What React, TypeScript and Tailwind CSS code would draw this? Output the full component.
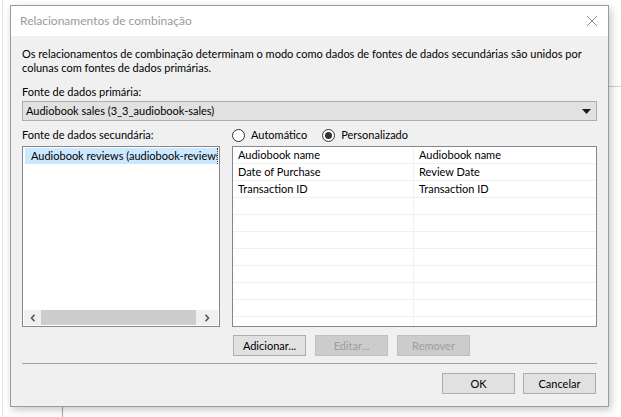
import React from "react";

const rows = [
  ["Audiobook name", "Audiobook name"],
  ["Date of Purchase", "Review Date"],
  ["Transaction ID", "Transaction ID"],
  ["", ""],
  ["", ""],
  ["", ""],
  ["", ""],
  ["", ""],
  ["", ""],
  ["", ""],
  ["", ""],
];

function Radio({ checked, label }: { checked?: boolean; label: string }) {
  return (
    <div className="flex items-center">
      <div className="w-[13px] h-[13px] rounded-full border border-[#333] bg-white flex items-center justify-center">
        {checked && <div className="w-[7px] h-[7px] rounded-full bg-[#333]" />}
      </div>
      <span className="ml-[6px]">{label}</span>
    </div>
  );
}

function Btn({ label, disabled }: { label: string; disabled?: boolean }) {
  return (
    <div
      className={
        disabled
          ? "w-[73px] h-[21px] border border-[#bfbfbf] bg-[#cccccc] text-[#9d9d9d] flex items-center justify-center"
          : "w-[73px] h-[21px] border border-[#adadad] bg-[#e1e1e1] text-black flex items-center justify-center"
      }
    >
      {label}
    </div>
  );
}

export default function App() {
  return (
    <div
      className="relative w-[621px] h-[417px] bg-white overflow-hidden text-[11px] leading-[14px] text-black"
      style={{ fontFamily: 'Lato, "Liberation Sans", Arial, sans-serif' }}
    >
      {/* background page lines */}
      <div className="absolute left-[2px] top-0 w-px h-[417px] bg-[#e3e3e3]" />
      <div className="absolute left-[62px] top-[406px] w-px h-[11px] bg-[#a8a8a8]" />
      <div className="absolute left-[609px] top-[86px] w-[12px] h-px bg-[#d0d0d0]" />

      {/* dialog window */}
      <div className="absolute left-[10px] top-[5px] w-[599px] h-[402px] border border-[#9b9b9b] bg-[#f0f0f0] shadow-[2px_3px_8px_rgba(0,0,0,0.22)] flex flex-col">
        <div className="h-[30px] bg-white flex items-center justify-between pl-[9px] pr-[9px]">
          <span className="text-[12px] text-[#9a9a9a]">Relacionamentos de combinação</span>
          <svg width="12" height="12" viewBox="0 0 12 12" className="mr-[1px]">
            <path d="M1 1 L11 11 M11 1 L1 11" stroke="#8a8a8a" strokeWidth="1" fill="none" />
          </svg>
        </div>

        <div className="flex flex-col px-[11px] pt-[11px]">
          <p>
            Os relacionamentos de combinação determinam o modo como dados de fontes de dados secundárias são unidos por
            colunas com fontes de dados primárias.
          </p>
          <div className="mt-[10px]">Fonte de dados primária:</div>
          <div className="mt-[2px] h-[20px] border border-[#adadad] bg-[#e1e1e1] flex items-center justify-between pl-[3px] pr-[5px]">
            <span>Audiobook sales (3_3_audiobook-sales)</span>
            <svg width="9" height="5" viewBox="0 0 9 5">
              <path d="M0 0 H9 L4.5 5 Z" fill="#1a1a1a" />
            </svg>
          </div>

          <div className="mt-[7px] flex gap-[12px]">
            {/* left column */}
            <div className="w-[198px] flex flex-col">
              <div className="h-[14px]">Fonte de dados secundária:</div>
              <div className="mt-[4px] h-[181px] border border-[#828790] bg-white flex flex-col p-px">
                <div className="flex-1">
                  <div className="h-[16px] ml-px bg-[#cce8ff] flex items-center pl-[6px] overflow-hidden whitespace-nowrap border-r border-dotted border-[#333]">
                    Audiobook reviews (audiobook-reviews)
                  </div>
                </div>
                <div className="h-[15px] bg-[#f0f0f0] flex items-center">
                  <div className="w-[17px] h-[15px] flex items-center justify-center">
                    <svg width="6" height="8" viewBox="0 0 6 8">
                      <path d="M4.5 0.8 L1.5 4 L4.5 7.2" stroke="#555" strokeWidth="1.6" fill="none" />
                    </svg>
                  </div>
                  <div className="flex-1 h-[15px] bg-[#cdcdcd]" />
                  <div className="w-[22px] h-[15px] flex items-center justify-center">
                    <svg width="6" height="8" viewBox="0 0 6 8">
                      <path d="M1.5 0.8 L4.5 4 L1.5 7.2" stroke="#555" strokeWidth="1.6" fill="none" />
                    </svg>
                  </div>
                </div>
              </div>
            </div>

            {/* right column */}
            <div className="flex-1 flex flex-col">
              <div className="h-[14px] flex items-center">
                <Radio label="Automático" />
                <div className="ml-[15px]">
                  <Radio checked label="Personalizado" />
                </div>
              </div>
              <div className="mt-[4px] h-[181px] border border-[#828790] bg-white overflow-hidden">
                {rows.map((r, i) => (
                  <div key={i} className="flex h-[17px] border-b border-[#f0f0f0]">
                    <div className="w-[181px] border-r border-[#f0f0f0] pl-[5px] flex items-center whitespace-nowrap">
                      {r[0]}
                    </div>
                    <div className="flex-1 pl-[5px] flex items-center whitespace-nowrap">{r[1]}</div>
                  </div>
                ))}
              </div>
              <div className="mt-[8px] ml-px flex gap-[9px]">
                <Btn label="Adicionar..." />
                <Btn label="Editar..." disabled />
                <Btn label="Remover" disabled />
              </div>
            </div>
          </div>

          <div className="mt-[7px] h-px bg-[#a0a0a0]" />

          <div className="mt-[9px] flex justify-end gap-[8px] pr-px">
            <Btn label="OK" />
            <Btn label="Cancelar" />
          </div>
        </div>
      </div>
    </div>
  );
}
